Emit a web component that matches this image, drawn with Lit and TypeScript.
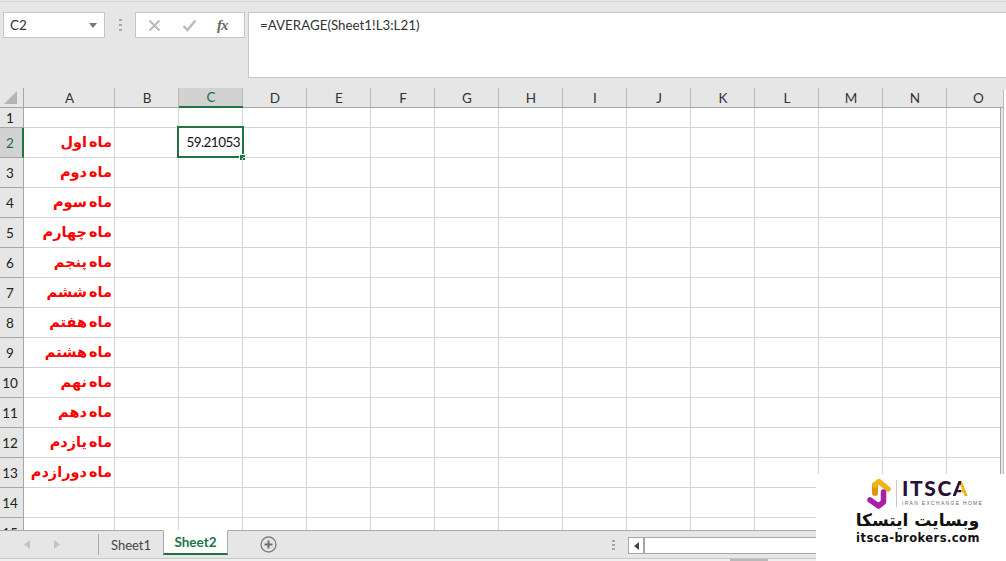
import { LitElement, html, css } from "lit";
import { customElement } from "lit/decorators.js";

const COLS = ["A", "B", "C", "D", "E", "F", "G", "H", "I", "J", "K", "L", "M", "N", "O"];
const MONTHS = ["", "ماه اول", "ماه دوم", "ماه سوم", "ماه چهارم", "ماه پنجم", "ماه ششم", "ماه هفتم", "ماه هشتم", "ماه نهم", "ماه دهم", "ماه یازدم", "ماه دورازدم", "", ""];

@customElement("app-root")
export class AppRoot extends LitElement {
  static styles = css`
    :host { display: block; width: 1006px; height: 561px; overflow: hidden; position: relative; background: #e6e6e6; font-family: Lato, "Liberation Sans", sans-serif; color: #222; }
    .top { height: 87px; box-sizing: border-box; border-top: 1px solid #d4d4d4; margin-top: 1px; padding: 10px 0 0 3px; display: flex; align-items: flex-start; background: #e6e6e6; }
    .namebox { width: 102px; height: 26px; box-sizing: border-box; background: #fff; border: 1px solid #c6c6c6; display: flex; align-items: center; justify-content: space-between; padding: 0 7px 0 6px; font-size: 13.5px; color: #333; }
    .caret { width: 0; height: 0; border-left: 4.5px solid transparent; border-right: 4.5px solid transparent; border-top: 5px solid #777; }
    .grip { width: 30px; height: 26px; display: flex; flex-direction: column; gap: 3px; align-items: center; justify-content: center; }
    .grip i { width: 3px; height: 2px; background: #a8a8a8; display: block; }
    .fxbox { width: 110px; height: 26px; box-sizing: border-box; background: #fff; border: 1px solid #c6c6c6; display: flex; align-items: center; padding-left: 12px; }
    .fxbox svg { display: block; }
    .fxbox .cancel { margin-right: 21px; }
    .fxbox .ok { margin-right: 20px; }
    .fx { font-family: "Liberation Serif", serif; font-style: italic; font-weight: bold; font-size: 15px; color: #666; letter-spacing: -1px; }
    .formula { margin-left: 3px; flex: 1; height: 66px; box-sizing: border-box; background: #fff; border: 1px solid #c6c6c6; border-right: none; padding: 3px 0 0 11px; font-size: 13.35px; line-height: 18px; color: #333; }

    .sheet { display: flex; height: 442px; }
    .grid { width: 1004px; height: 442px; overflow: hidden; display: grid; grid-template-columns: 24px 91px repeat(13, 64px) 53px 4px; grid-template-rows: 20px 20px repeat(14, 30px); background: #fff; }
    .vbar { width: 2px; margin-top: 2px; background: #fff; border-left: 1px solid #bdbdbd; box-sizing: content-box; }
    .corner { box-sizing: border-box; background: #e6e6e6; border-right: 1px solid #a6a6a6; border-bottom: 1px solid #a6a6a6; display: flex; align-items: center; justify-content: center; padding-right: 2px; }
    .ch { box-sizing: border-box; background: #e6e6e6; border-bottom: 1px solid #a6a6a6; display: flex; align-items: center; justify-content: center; font-size: 13.5px; color: #333; position: relative; }
    .ch::after { content: ""; position: absolute; right: 0; top: 0; bottom: 0; width: 1px; background: #b8b8b8; }
    .ch.sel { background: #d2d2d2; color: #1f6e43; border-bottom: 2px solid #217346; }
    .ch.last { padding-left: 10px; }
    .ch.last::after, .ch.pad::after { display: none; }
    .ch.pad { background: #e6e6e6; }
    .rh { box-sizing: border-box; background: #e6e6e6; border-right: 1px solid #a6a6a6; border-bottom: 1px solid #a6a6a6; display: flex; align-items: center; justify-content: center; font-size: 13.5px; color: #222; padding-right: 3px; }
    .rh.sel { background: #d2d2d2; color: #1f6e43; border-right: 2px solid #217346; padding-right: 2px; }
    .c { box-sizing: border-box; border-right: 1px solid #d4d4d4; border-bottom: 1px solid #d4d4d4; position: relative; display: flex; align-items: center; justify-content: flex-end; padding-right: 2px; }
    .c.end { border-right: none; }
    .gut { box-sizing: border-box; background: #e6e6e6; border-left: 1px solid #a6a6a6; }
    .fa { font-family: "DejaVu Sans", sans-serif; font-weight: bold; font-size: 14.5px; word-spacing: -3px; color: #f00; white-space: nowrap; margin-bottom: 2px; }
    .num { font-size: 13.5px; letter-spacing: -0.55px; color: #111; }
    .select { position: absolute; left: -2px; top: -2px; width: 67px; height: 32px; box-sizing: border-box; border: 2px solid #217346; pointer-events: none; display: flex; align-items: center; justify-content: flex-end; padding-right: 2px; }
    .handle { position: absolute; right: -3px; bottom: -4px; width: 5px; height: 5px; background: #217346; box-shadow: -1px -1px 0 #fff; }

    .tabs { height: 28px; box-sizing: border-box; border-top: 1px solid #a6a6a6; display: flex; align-items: stretch; background: #e6e6e6; position: relative; }
    .nav { width: 98px; display: flex; align-items: center; padding-left: 24px; box-sizing: border-box; gap: 24px; }
    .sep { width: 1px; height: 21px; margin-top: 3px; background: #a6a6a6; }
    .tab { font-size: 13px; display: flex; align-items: center; justify-content: center; color: #444; }
    .tab.one { width: 64px; }
    .tab.two { width: 65px; height: 25px; box-sizing: border-box; margin-top: -1px; background: #fff; border: 1px solid #a6a6a6; border-top-color: #fff; border-bottom: 2px solid #217346; font-weight: bold; font-size: 13.5px; color: #217346; }
    .plus { margin-left: 32px; margin-top: 5px; width: 17px; height: 17px; }
    .hgrip { margin-left: 328px; width: 16px; display: flex; flex-direction: column; gap: 2px; justify-content: center; align-items: center; }
    .hgrip i { width: 3px; height: 2px; background: #a8a8a8; display: block; }
    .hscroll { margin-top: 6px; margin-left: 7px; height: 15px; flex: 1; background: #fff; border: 1px solid #a6a6a6; border-right: none; display: flex; }
    .harrow { width: 14px; border-right: 2px solid #a6a6a6; display: flex; align-items: center; justify-content: center; }
    .harrow::before { content: ""; border-top: 4px solid transparent; border-bottom: 4px solid transparent; border-right: 5px solid #444; }
    .status { height: 3px; background: #f0f0f0; border-top: 1px solid #c8c8c8; box-sizing: border-box; display: flex; padding-left: 730px; }
    .status i { width: 38px; background: #b9b9b9; display: block; }

    .logo { position: absolute; left: 816px; top: 474px; width: 190px; height: 87px; background: #fff; display: flex; flex-direction: column; align-items: center; }
    .brand { display: flex; align-items: center; align-self: flex-start; margin-top: 4px; height: 31px; margin-left: 50px; }
    .mark { display: block; }
    .div { width: 1px; height: 27px; background: #c9c9c9; margin: 0 5px 0 4px; }
    .words { display: flex; flex-direction: column; width: 68px; margin-top: -2px; }
    .itsca { font-family: Lato, sans-serif; font-weight: 900; font-size: 21px; line-height: 19px; color: #2b1036; letter-spacing: 1.6px; white-space: nowrap; }
    .itsca b { font-weight: 900; background: linear-gradient(90deg, #2b1036 50%, #eeb310 50%); -webkit-background-clip: text; background-clip: text; color: transparent; }
    .sub { font-family: "Liberation Sans", sans-serif; font-size: 5px; line-height: 7px; letter-spacing: 1.3px; color: #666; white-space: nowrap; margin-top: 3px; }
    .persian { font-family: "DejaVu Sans", sans-serif; font-weight: bold; font-size: 17px; line-height: 22px; color: #111; margin-top: 0; margin-left: 13px; }
    .url { font-family: "DejaVu Sans", sans-serif; font-weight: bold; font-size: 11.5px; line-height: 15px; color: #111; letter-spacing: 0.45px; margin-top: 0; margin-left: 14px; white-space: nowrap; }
  `;

  private grip() {
    return html`<i></i><i></i><i></i>`;
  }

  private row(r: number) {
    const label = r + 1;
    return html`
      <div class="rh ${r === 1 ? "sel" : ""}">${label}</div>
      ${COLS.map((c, i) => html`
        <div class="c ${i === 14 ? "end" : ""}">
          ${i === 0 && MONTHS[r] ? html`<span class="fa" dir="rtl">${MONTHS[r]}</span>` : ""}
          ${i === 2 && r === 1 ? html`<div class="select"><span class="num">59.21053</span><div class="handle"></div></div>` : ""}
        </div>`)}
      <div class="gut"></div>
    `;
  }

  render() {
    return html`
      <div class="top">
        <div class="namebox"><span>C2</span><span class="caret"></span></div>
        <div class="grip">${this.grip()}</div>
        <div class="fxbox">
          <svg class="cancel" width="13" height="13" viewBox="0 0 13 13"><path d="M1.5 1.5 L11.5 11.5 M11.5 1.5 L1.5 11.5" stroke="#b9b9b9" stroke-width="2" fill="none"/></svg>
          <svg class="ok" width="15" height="13" viewBox="0 0 15 13"><path d="M1.5 7 L5.5 11 L13.5 1.5" stroke="#b9b9b9" stroke-width="2.4" fill="none"/></svg>
          <span class="fx">fx</span>
        </div>
        <div class="formula">=AVERAGE(Sheet1!L3:L21)</div>
      </div>
      <div class="sheet">
        <div class="grid">
          <div class="corner"><svg width="13" height="13" viewBox="0 0 13 13"><path d="M13 0 V13 H0 Z" fill="#b4b4b4"/></svg></div>
          ${COLS.map((c, i) => html`<div class="ch ${i === 2 ? "sel" : ""} ${i === 14 ? "last" : ""}">${c}</div>`)}
          <div class="ch pad"></div>
          ${MONTHS.map((_, r) => this.row(r))}
        </div>
        <div class="vbar"></div>
      </div>
      <div class="tabs">
        <div class="nav">
          <svg width="6" height="9" viewBox="0 0 6 9"><path d="M6 0 V9 L0 4.5 Z" fill="#c2c2c2"/></svg>
          <svg width="6" height="9" viewBox="0 0 6 9"><path d="M0 0 V9 L6 4.5 Z" fill="#c2c2c2"/></svg>
        </div>
        <div class="sep"></div>
        <div class="tab one">Sheet1</div>
        <div class="tab two">Sheet2</div>
        <svg class="plus" viewBox="0 0 17 17"><circle cx="8.5" cy="8.5" r="7.5" fill="none" stroke="#7f7f7f" stroke-width="1.3"/><path d="M8.5 4.5 V12.5 M4.5 8.5 H12.5" stroke="#6f6f6f" stroke-width="2"/></svg>
        <div class="hgrip">${this.grip()}</div>
        <div class="hscroll"><div class="harrow"></div></div>
      </div>
      <div class="status"><i></i></div>
      <div class="logo">
        <div class="brand">
          <svg class="mark" width="26" height="31" viewBox="0 0 26 31">
            <path d="M9 15 V7" fill="none" stroke="#dd9414" stroke-width="6" stroke-linecap="round"/>
            <path d="M9 7 L13 3.5 L22 11" fill="none" stroke="#f0b414" stroke-width="5.5" stroke-linecap="round" stroke-linejoin="round"/>
            <path d="M4 22 L12.5 28 L17.5 24 V14" fill="none" stroke="#a81fa8" stroke-width="5.5" stroke-linecap="round" stroke-linejoin="round"/>
          </svg>
          <div class="div"></div>
          <div class="words">
            <div class="itsca">ITSC<b>A</b></div>
            <div class="sub">IRAN EXCHANGE HOME</div>
          </div>
        </div>
        <div class="persian" dir="rtl">وبسایت ایتسکا</div>
        <div class="url">itsca-brokers.com</div>
      </div>
    `;
  }
}
